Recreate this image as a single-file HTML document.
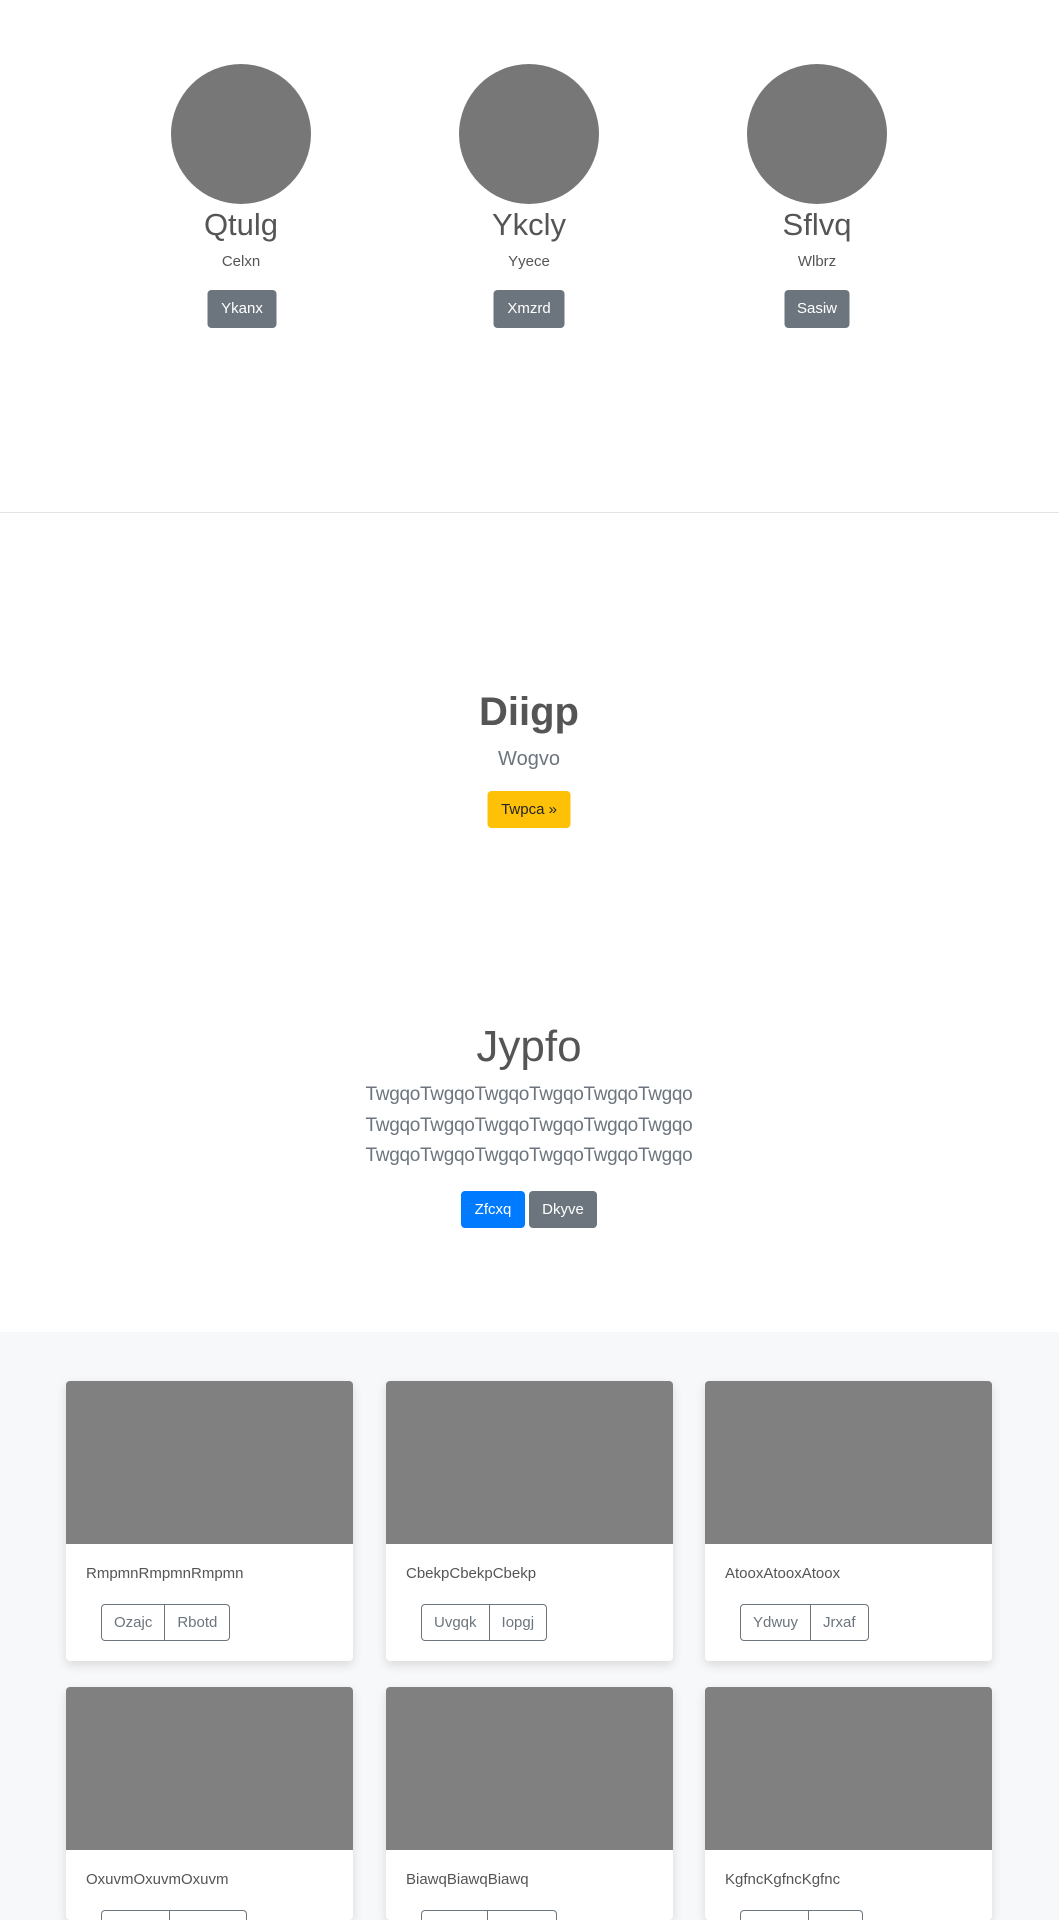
<!DOCTYPE html>
<html style="height:1920px;overflow:hidden"><head><meta charset="utf-8"><style>
*{box-sizing:border-box;margin:0;padding:0}
body{width:1059px;height:1920px;overflow:hidden;background:#fff;font-family:"Liberation Sans",sans-serif;color:#555;position:relative}
.a{position:absolute}
.c{position:absolute;width:140px;height:140px;border-radius:50%;background:#777;top:64px}
.ctr{position:absolute;text-align:center;white-space:nowrap;transform:translateX(-50%)}
.btn{display:inline-block;border-radius:4px;color:#fff;font-size:15px;text-align:center}
.card{position:absolute;width:287px;height:280px;background:#fff;border-radius:4px;box-shadow:0 4px 10px rgba(0,0,0,.12);overflow:hidden}
.card .img{height:163px;background:#808080}
.card .t{position:absolute;left:20px;top:184px;font-size:15px;color:#555}
.card .g{position:absolute;left:35px;top:223px;height:37px;border:1px solid #6c757d;border-radius:4px;display:flex;font-size:15px;color:#6c757d}
.card .g span{padding:0 12px;line-height:35px}
.card .g span+span{border-left:1px solid #6c757d}
</style></head><body>
<div class="c" style="left:171px"></div>
<div class="c" style="left:459px"></div>
<div class="c" style="left:747px"></div>
<div class="ctr" style="left:241px;top:207px;font-size:31px">Qtulg</div>
<div class="ctr" style="left:529px;top:207px;font-size:31px">Ykcly</div>
<div class="ctr" style="left:817px;top:207px;font-size:31px">Sflvq</div>
<div class="ctr" style="left:241px;top:253px;font-size:15px">Celxn</div>
<div class="ctr" style="left:529px;top:253px;font-size:15px">Yyece</div>
<div class="ctr" style="left:817px;top:253px;font-size:15px">Wlbrz</div>
<div class="ctr btn" style="left:242px;top:290px;width:69px;height:38px;line-height:38px;background:#6c757d">Ykanx</div>
<div class="ctr btn" style="left:529px;top:290px;width:71px;height:38px;line-height:38px;background:#6c757d">Xmzrd</div>
<div class="ctr btn" style="left:817px;top:290px;width:65px;height:38px;line-height:38px;background:#6c757d">Sasiw</div>
<div class="a" style="left:0;top:512px;width:1059px;height:1px;background:#e3e3e3"></div>

<div class="ctr" style="left:529px;top:690px;font-size:40px;font-weight:bold">Diigp</div>
<div class="ctr" style="left:529px;top:748px;font-size:20px;color:#6c757d">Wogvo</div>
<div class="ctr btn" style="left:529px;top:791px;width:83px;height:37px;line-height:37px;background:#ffc107;color:#212529">Twpca »</div>

<div class="ctr" style="left:529px;top:1022px;font-size:44px;font-weight:300">Jypfo</div>
<div class="ctr" style="left:529px;top:1080px;font-size:19px;line-height:30.5px;color:#6c757d;letter-spacing:-0.3px">TwgqoTwgqoTwgqoTwgqoTwgqoTwgqo<br>TwgqoTwgqoTwgqoTwgqoTwgqoTwgqo<br>TwgqoTwgqoTwgqoTwgqoTwgqoTwgqo</div>
<div class="btn a" style="left:461px;top:1191px;width:64px;height:37px;line-height:37px;background:#007bff">Zfcxq</div>
<div class="btn a" style="left:529px;top:1191px;width:68px;height:37px;line-height:37px;background:#6c757d">Dkyve</div>

<div class="a" style="left:0;top:1332px;width:1059px;height:588px;background:#f7f8f9"></div>
<div class="card" style="left:66px;top:1381px"><div class="img"></div><div class="t">RmpmnRmpmnRmpmn</div><div class="g"><span>Ozajc</span><span>Rbotd</span></div></div>
<div class="card" style="left:386px;top:1381px"><div class="img"></div><div class="t">CbekpCbekpCbekp</div><div class="g"><span>Uvgqk</span><span>Iopgj</span></div></div>
<div class="card" style="left:705px;top:1381px"><div class="img"></div><div class="t">AtooxAtooxAtoox</div><div class="g"><span>Ydwuy</span><span>Jrxaf</span></div></div>
<div class="card" style="left:66px;top:1687px;height:233px"><div class="img"></div><div class="t">OxuvmOxuvmOxuvm</div><div class="g"><span>Aaaaa</span><span>Bbbbbb</span></div></div>
<div class="card" style="left:386px;top:1687px;height:233px"><div class="img"></div><div class="t">BiawqBiawqBiawq</div><div class="g"><span>Ccccc</span><span>Ddddd</span></div></div>
<div class="card" style="left:705px;top:1687px;height:233px"><div class="img"></div><div class="t">KgfncKgfncKgfnc</div><div class="g"><span>Eeeee</span><span>Ffffff</span></div></div>
</body></html>
